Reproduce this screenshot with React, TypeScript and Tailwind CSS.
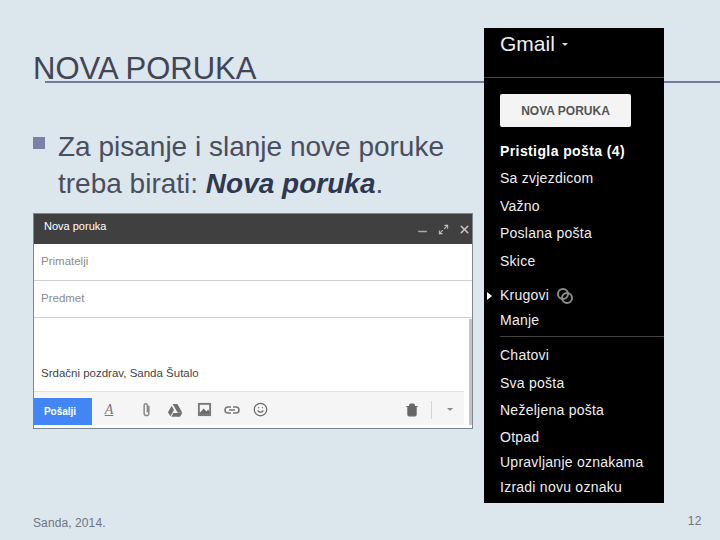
import { Maximize2, Minus, Smile, Trash2, X } from "lucide-react";

const sans = "font-['Liberation_Sans',Arial,sans-serif]";

const topLinks = ["Sa zvjezdicom", "Važno", "Poslana pošta", "Skice"];
const bottomLinks = [
  { label: "Chatovi", cls: "h-[27px]" },
  { label: "Sva pošta", cls: "h-[28px]" },
  { label: "Neželjena pošta", cls: "h-[27px]" },
  { label: "Otpad", cls: "h-[26px]" },
  { label: "Upravljanje oznakama", cls: "h-[25px]" },
  { label: "Izradi novu oznaku", cls: "h-[25px]" },
];

function Compose() {
  return (
    <div className="flex h-[216px] w-[440px] flex-col border border-[#7d8794] bg-white">
      <div className="flex h-[30px] shrink-0 items-center bg-[#404040] pl-[10px] pr-[1px] text-[11px] text-white">
        <span className="mb-[6px] mr-auto">Nova poruka</span>
        <Minus size={13} strokeWidth={2.6} className="mr-[9px] mt-[4px] text-[#a9a9a9]" />
        <Maximize2 size={11} strokeWidth={2.2} className="mr-[9px] text-[#c2c2c2]" />
        <X size={13} strokeWidth={2.8} className="text-[#c4c4c4]" />
      </div>
      <div className="flex h-[37px] shrink-0 items-center border-b border-[#cfcfcf] pl-[7px] text-[11.5px] text-[#8b8b8b]">
        Primatelji
      </div>
      <div className="flex h-[37px] shrink-0 items-center border-b border-[#cfcfcf] pl-[7px] text-[11.5px] text-[#8b8b8b]">
        Predmet
      </div>
      <div className="flex min-h-0 flex-1">
        <div className="flex min-w-0 flex-1 flex-col">
          <div className="flex flex-1 items-end pb-[9px] pl-[7px] text-[11.5px] text-[#444]">
            Srdačni pozdrav, Sanda Šutalo
          </div>
          <div className="flex h-[34px] shrink-0 items-center border-t border-[#e2e2e2] bg-[#f5f5f5] pt-[2px]">
            <div className="flex h-[27px] w-[58px] items-center justify-center self-end bg-[#4285f4] pr-[6px] text-[10px] font-bold text-white">
              Pošalji
            </div>
            <div className="ml-[9px] flex w-[16px] justify-center font-['Liberation_Serif',serif] text-[14px] italic text-[#777] underline">
              A
            </div>
            <svg viewBox="0 0 16 16" className="ml-[22px] h-[15px] w-[15px] fill-none stroke-[#8a8a8a] stroke-[1.6]">
              <path d="M10.500 4v8a2.500 2.500 0 0 1-5 0V3.500a1.700 1.700 0 0 1 3.400 0V11" />
            </svg>
            <svg viewBox="0 0 24 24" className="ml-[13px] h-[16px] w-[16px] fill-[#6f6f6f]">
              <path d="M8.500 3h7l7.500 13h-7zM7 5.500 10.500 12 5 21.500 1.500 15.500zM9.500 16.500H23l-3.500 5.500H6.500z" />
            </svg>
            <svg viewBox="0 0 16 16" className="ml-[14px] h-[15px] w-[15px]">
              <path d="M1 1h14v14H1z" fill="#7a7a7a" />
              <path d="M3 3h10v8H3z" fill="#f5f5f5" />
              <path d="m3 12 4-5 3 3 2-2 2 4z" fill="#6a6a6a" />
            </svg>
            <svg viewBox="0 0 16 16" className="ml-[12px] h-[16px] w-[16px] fill-none stroke-[#777] stroke-[1.6]">
              <path d="M7 5H4a3 3 0 0 0 0 6h3M9 5h3a3 3 0 0 1 0 6H9M5 8h6" />
            </svg>
            <Smile size={15} className="ml-[13px] text-[#666]" />
            <Trash2 size={14} className="ml-auto mr-[12px] fill-[#666] text-[#666]" />
            <div className="h-[18px] w-px bg-[#d4d4d4]" />
            <div className="ml-[15px] mr-[11px] h-0 w-0 border-x-[3px] border-t-[3px] border-x-transparent border-t-[#8a8a8a]" />
          </div>
        </div>
        <div className="w-[8px] shrink-0 pl-[5px] pt-[1px]">
          <div className="h-full w-[3px] bg-[#c4c4c4]" />
        </div>
      </div>
      <div className="h-[3px] shrink-0" />
    </div>
  );
}

function GmailPanel() {
  return (
    <div className="flex h-[475px] w-[180px] flex-col bg-black pl-[16px] text-[14px] tracking-[0.25px] text-[#eeeeee]">
      <div className="-ml-[16px] flex h-[50px] shrink-0 items-start border-b border-[#444] pl-[16px] pt-[3px] text-[21px] leading-[26px] tracking-normal">
        Gmail
        <span className="ml-[7px] mt-[12px] h-0 w-0 border-x-[3px] border-t-[3px] border-x-transparent border-t-[#ddd]" />
      </div>
      <div className="mt-[16px] flex h-[33px] w-[131px] shrink-0 items-center justify-center rounded-[2px] bg-[#f4f4f4] text-[12px] font-bold tracking-normal text-[#555]">
        NOVA PORUKA
      </div>
      <div className="mt-[11px] flex h-[27px] shrink-0 items-center font-bold tracking-[0.4px] text-white">
        Pristigla pošta (4)
      </div>
      {topLinks.map((label) => (
        <div key={label} className="flex h-[27.500px] shrink-0 items-center">
          {label}
        </div>
      ))}
      <div className="relative mt-[7px] flex h-[27px] shrink-0 items-center gap-[7px]">
        <span className="absolute -left-[13px] top-[10px] h-0 w-0 border-y-[4px] border-l-[5px] border-y-transparent border-l-white" />
        Krugovi
        <svg viewBox="0 0 18 18" className="h-[18px] w-[18px] fill-none stroke-[#8a8a8a] stroke-2">
          <circle cx="7" cy="7" r="5" />
          <circle cx="11" cy="11" r="5" />
        </svg>
      </div>
      <div className="flex h-[23px] shrink-0 items-center">Manje</div>
      <div className="mt-[4px] h-px shrink-0 bg-[#444]" />
      <div className="mt-[5px] flex flex-col">
        {bottomLinks.map((l) => (
          <div key={l.label} className={`flex items-center ${l.cls}`}>
            {l.label}
          </div>
        ))}
      </div>
    </div>
  );
}

export default function App() {
  return (
    <div className={`relative flex h-[540px] w-[720px] overflow-hidden bg-[#dce6ed] text-[#4a4e5e] ${sans}`}>
      {/* title rule runs behind the gmail panel */}
      <div className="absolute left-[45px] right-0 top-[81px] h-[2px] bg-[#717a9f]" />

      <div className="relative flex w-[484px] shrink-0 flex-col pl-[33px]">
        <h1 className="mt-[51px] h-[35px] text-[31px] leading-[36px] text-[#414554]">NOVA PORUKA</h1>
        <div className="mt-[42px] flex">
          <span className="mt-[9px] h-[12px] w-[12px] shrink-0 bg-[#7a82aa]" />
          <p className="ml-[13px] text-[28px] leading-[37px]">
            Za pisanje i slanje nove poruke
            <br />
            treba birati: <b className="italic text-[#2f3850]">Nova poruka</b>.
          </p>
        </div>
        <div className="mt-[11px]">
          <Compose />
        </div>
        <div className="mt-auto pb-[8px] text-[12px] tracking-[0.1px] text-[#6f7585]">Sanda, 2014.</div>
      </div>

      <div className="relative flex flex-1 flex-col pt-[28px]">
        <GmailPanel />
        <div className="mt-[9px] w-[218px] text-right text-[12px] tracking-[0.5px] text-[#6f7585]">12</div>
      </div>
    </div>
  );
}
